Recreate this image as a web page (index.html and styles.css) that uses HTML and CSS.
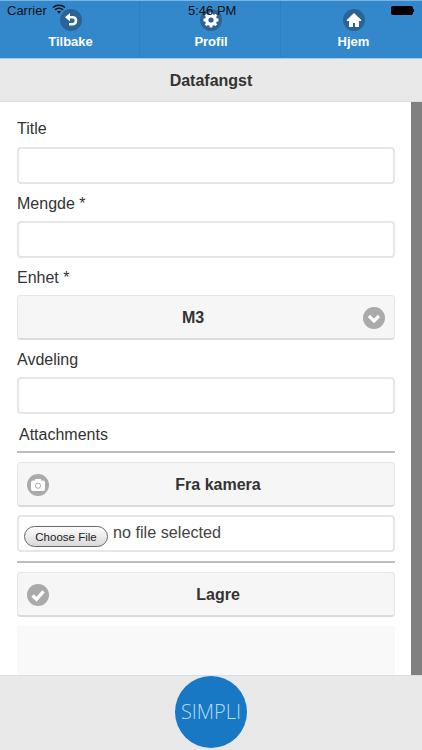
FILE: index.html
```html
<!DOCTYPE html>
<html lang="no">
<head>
<meta charset="utf-8">
<title>Datafangst</title>
<link rel="stylesheet" href="styles.css">
</head>
<body>
<div class="app">
  <header class="nav">
    <a class="nav-item"><span class="nav-icon"><svg viewBox="0 0 22 22" width="22" height="22"><path d="M9 8.200h3.500c2.300 0 3.500 1.500 3.500 3.400 0 2.100-1.500 3.700-4 3.700H9" fill="none" stroke="#fff" stroke-width="2.600"/><path d="M5 8.200l5-4.200v8.400z" fill="#fff"/></svg></span><span>Tilbake</span></a>
    <a class="nav-item"><span class="nav-icon"><svg viewBox="0 0 22 22" width="22" height="22"><circle cx="11" cy="11" r="4.500" fill="none" stroke="#fff" stroke-width="3"/><path d="M11 3.500v15M3.500 11h15M5.700 5.700l10.600 10.600M16.300 5.700L5.700 16.300" stroke="#fff" stroke-width="2.800"/><circle cx="11" cy="11" r="2.600" fill="#2a6394"/></svg></span><span>Profil</span></a>
    <a class="nav-item"><span class="nav-icon"><svg viewBox="0 0 22 22" width="22" height="22"><path d="M11 4L3.500 11.200l.8.800H6v6h4v-4h2v4h4v-6h1.700l.8-.8z" fill="#fff"/></svg></span><span>Hjem</span></a>
  </header>
  <div class="status">
    <span class="carrier">Carrier <svg class="wifi" viewBox="0 0 14 10" width="14" height="10"><path d="M1 3.500a9 9 0 0 1 12 0M3 5.700a6 6 0 0 1 8 0" fill="none" stroke="#111" stroke-width="1.400"/><path d="M5 7.600a3 3 0 0 1 4 0L7 9.800z" fill="#111"/></svg></span>
    <span class="clock">5:46 PM</span>
    <span class="battery"></span>
  </div>
  <div class="subhead">Datafangst</div>
  <div class="middle">
    <main class="form">
      <label class="label first">Title</label>
      <div class="input"></div>
      <label class="label">Mengde *</label>
      <div class="input"></div>
      <label class="label">Enhet *</label>
      <div class="btn select">M3
        <span class="round right"><svg viewBox="0 0 22 22" width="22" height="22"><path d="M6 9l5 5 5-5" fill="none" stroke="#fff" stroke-width="3.200"/></svg></span>
      </div>
      <label class="label">Avdeling</label>
      <div class="input"></div>
      <div class="attach">Attachments</div>
      <hr class="rule">
      <div class="btn action">
        <span class="round left"><svg viewBox="0 0 22 22" width="22" height="22"><rect x="4" y="6.500" width="14" height="10.500" rx="2" fill="#fff"/><rect x="8" y="5" width="6" height="3" fill="#fff"/><circle cx="11" cy="11.700" r="2.600" fill="none" stroke="#aaa"/></svg></span>
        Fra kamera
      </div>
      <div class="file"><span class="file-btn">Choose File</span><span class="file-text">no file selected</span></div>
      <hr class="rule rule-b">
      <div class="btn action">
        <span class="round left"><svg viewBox="0 0 22 22" width="22" height="22"><path d="M5.500 11.500l4 3.800 7-8" fill="none" stroke="#fff" stroke-width="3.400"/></svg></span>
        Lagre
      </div>
      <div class="panel"></div>
    </main>
    <div class="scrollbar"></div>
  </div>
  <footer class="foot"><div class="logo">SIMPLI</div></footer>
</div>
</body>
</html>
```
FILE: styles.css
```css
* { box-sizing: border-box; }
html, body { margin: 0; padding: 0; }
body { font-family: "Liberation Sans", Arial, sans-serif; color: #333; background: #fff; }
.app { position: relative; width: 422px; height: 750px; display: flex; flex-direction: column; overflow: hidden; }

.nav { height: 59px; display: grid; grid-template-columns: 140px 141px 141px; background: #3388cc; border-top: 1px solid #7fb3dc; border-bottom: 1px solid #a9c9e2; }
.nav-item { display: flex; flex-direction: column; align-items: center; padding: 8px 0 0 2px; color: #fff; font-size: 13px; font-weight: 700; line-height: 15px; border-right: 1px solid #2f80c2; }
.nav-item:last-child { border-right: 0; padding-left: 4px; }
.nav-icon { width: 22px; height: 22px; border-radius: 50%; background: #2a6394; margin-bottom: 3px; }
.nav-icon svg { display: block; }

.status { position: absolute; top: 0; left: 0; width: 422px; height: 20px; color: #111; font-size: 13px; line-height: 22px; }
.carrier { position: absolute; left: 7px; top: 0; }
.wifi { vertical-align: 1px; margin-left: 2px; }
.clock { position: absolute; left: 188px; top: 0; }
.battery { position: absolute; left: 391px; top: 6px; width: 22px; height: 9px; background: #000; border-radius: 2px; }
.battery::after { content: ""; position: absolute; left: 22px; top: 3px; width: 1px; height: 3px; background: #000; }

.subhead { height: 43px; background: #e9e9e9; border-bottom: 1px solid #ddd; text-align: center; font-size: 16px; font-weight: 700; line-height: 44px; color: #333; }

.middle { height: 573px; display: flex; }
.form { width: 411px; padding: 0 16px 0 17px; overflow: hidden; }
.scrollbar { width: 11px; background: #808080; }

.label { display: block; height: 37px; padding-top: 10px; font-size: 16px; line-height: 20px; color: #333; }
.first { height: 45px; padding-top: 17px; }

.input { height: 37px; background: #fff; border: 2px solid #e6e6e6; border-radius: 4px; }
.btn { position: relative; display: flex; align-items: center; justify-content: center; height: 45px; padding-top: 2px; background: #f6f6f6; border: 1px solid #e6e6e6; border-bottom: 2px solid #dadada; border-radius: 4px; font-size: 16px; font-weight: 700; color: #333; }
.select { padding-right: 26px; }
.action { padding-left: 24px; }
.round { position: absolute; top: 11px; width: 22px; height: 22px; border-radius: 50%; background: #aaa; }
.round svg { display: block; }
.right { right: 9px; }
.left { left: 9px; }

.attach { margin: 10px 0 0 2px; height: 20px; padding-top: 1px; font-size: 16px; line-height: 20px; color: #333; }
.rule { margin: 7px 0 9px; height: 2px; border: 0; background: #bdbdbd; }
.rule-b { margin: 9px 0 9px; }

.file { display: flex; align-items: flex-start; height: 37px; margin-top: 8px; padding: 7px 0 0 5px; border: 2px solid #e6e6e6; border-radius: 4px; background: #fff; }
.file-btn { width: 84px; height: 21px; margin-top: 2px; border: 1px solid #666; border-radius: 11px; background: linear-gradient(#fdfdfd, #d9d9d9); font-size: 11.5px; line-height: 20px; text-align: center; color: #222; }
.file-text { margin-left: 5px; font-size: 16.2px; line-height: 16px; color: #444; }
.panel { height: 60px; margin-top: 9px; background: #f9f9f9; }

.foot { position: relative; flex: 1; background: #e9e9e9; border-top: 1px solid #ddd; display: flex; justify-content: center; }
.logo { width: 72px; height: 72px; border-radius: 50%; background: #1878c4; color: #b5dcf6; font-size: 20px; line-height: 72px; text-align: center; font-family: "Open Sans", sans-serif; font-weight: 300; }
```
